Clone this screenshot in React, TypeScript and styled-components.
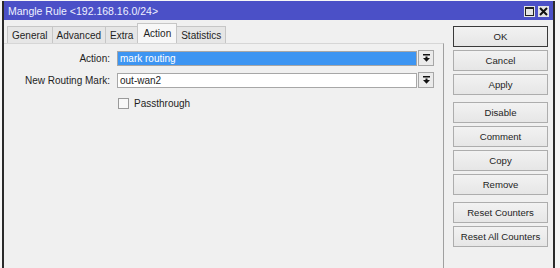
import React from "react";
import styled, { createGlobalStyle } from "styled-components";

const GlobalStyle = createGlobalStyle`
  html, body {
    margin: 0;
    padding: 0;
    background: #f6f6f6;
    overflow: hidden;
  }
  body {
    font-family: "Liberation Sans", Arial, sans-serif;
    font-size: 10px;
    color: #1e1e1e;
  }
`;

const tabs = ["General", "Advanced", "Extra", "Action", "Statistics"];

const buttonGroups = [
  ["OK", "Cancel", "Apply"],
  ["Disable", "Comment", "Copy", "Remove"],
  ["Reset Counters", "Reset All Counters"],
];

export default function App() {
  return (
    <>
      <GlobalStyle />
      <Window>
        <TitleBar>
          <Title>Mangle Rule &lt;192.168.16.0/24&gt;</Title>
          <Controls>
            <ControlBox>
              <svg width="9" height="9" viewBox="0 0 9 9">
                <rect x="0.5" y="0.5" width="8" height="8" fill="none" stroke="#222" />
                <rect x="0" y="0" width="9" height="2" fill="#222" />
              </svg>
            </ControlBox>
            <ControlBox>
              <svg width="9" height="9" viewBox="0 0 9 9">
                <path d="M1 1 L8 8 M8 1 L1 8" stroke="#111" strokeWidth="2" />
              </svg>
            </ControlBox>
          </Controls>
        </TitleBar>
        <Body>
          <LeftPanel>
            <TabBar>
              {tabs.map((t) => (
                <Tab key={t} $active={t === "Action"}>
                  {t}
                </Tab>
              ))}
            </TabBar>
            <Pane>
              <FormGrid>
                <Label>Action:</Label>
                <Field $selected>mark routing</Field>
                <DropButton>
                  <DropIcon />
                </DropButton>

                <Label>New Routing Mark:</Label>
                <Field>out-wan2</Field>
                <DropButton>
                  <DropIcon />
                </DropButton>

                <span />
                <CheckRow>
                  <CheckBox />
                  <span>Passthrough</span>
                </CheckRow>
              </FormGrid>
            </Pane>
          </LeftPanel>
          <ButtonColumn>
            {buttonGroups.map((group, i) => (
              <ButtonGroup key={i}>
                {group.map((b) => (
                  <Button key={b} $default={b === "OK"}>
                    {b}
                  </Button>
                ))}
              </ButtonGroup>
            ))}
          </ButtonColumn>
        </Body>
      </Window>
    </>
  );
}

function DropIcon() {
  return (
    <svg width="7" height="8" viewBox="0 0 7 8">
      <rect x="0" y="0" width="7" height="1.5" fill="#111" />
      <rect x="2.5" y="2.5" width="2" height="2" fill="#111" />
      <polygon points="0,4 7,4 3.5,7.8" fill="#111" />
    </svg>
  );
}

const Window = styled.div`
  box-sizing: border-box;
  margin: 1px 0 0 2px;
  width: 553px;
  height: 267px;
  border-left: 2px solid #2a2a2a;
  border-right: 2px solid #2a2a2a;
  background: #f0f0f0;
  display: flex;
  flex-direction: column;
`;

const TitleBar = styled.div`
  height: 19px;
  background: #4b50c7;
  display: flex;
  align-items: center;
  padding: 0 4px 0 4px;
  color: #eef0ff;
  font-size: 10.5px;
`;

const Title = styled.span`
  white-space: nowrap;
`;

const Controls = styled.div`
  margin-left: auto;
  display: flex;
  gap: 3px;
  margin-top: 1px;
`;

const ControlBox = styled.div`
  width: 11px;
  height: 11px;
  background: #e4e4e4;
  display: flex;
  align-items: center;
  justify-content: center;
`;

const Body = styled.div`
  flex: 1;
  display: flex;
  min-height: 0;
`;

const LeftPanel = styled.div`
  flex: 1;
  display: flex;
  flex-direction: column;
`;

const TabBar = styled.div`
  height: 23px;
  box-sizing: border-box;
  display: flex;
  align-items: flex-end;
  padding-left: 3px;
`;

const Tab = styled.div<{ $active?: boolean }>`
  height: ${(p) => (p.$active ? "20px" : "17px")};
  box-sizing: border-box;
  padding: 0 ${(p) => (p.$active ? "5px" : "4px")};
  display: flex;
  align-items: center;
  border: 1px solid #c6c6c6;
  border-bottom: none;
  margin-right: -1px;
  background: ${(p) => (p.$active ? "#f7f7f7" : "#e6e6e6")};
  color: #1e1e1e;
  white-space: nowrap;
  position: relative;
  z-index: ${(p) => (p.$active ? 1 : 0)};
`;

const Pane = styled.div`
  flex: 1;
  border-top: 1px solid #d6d6d6;
  border-right: 1px solid #a0a0a0;
  padding-top: 6px;
`;

const FormGrid = styled.div`
  display: grid;
  grid-template-columns: 106px 308px 16px;
  grid-auto-rows: 16px;
  row-gap: 6px;
  align-items: center;
`;

const Label = styled.div`
  text-align: right;
  white-space: nowrap;
  grid-column: 1;
`;

const Field = styled.div<{ $selected?: boolean }>`
  margin-left: 7px;
  margin-right: 1px;
  height: 15px;
  box-sizing: border-box;
  border: 1px solid #a7a7a7;
  background: ${(p) => (p.$selected ? "#3d95f2" : "#ffffff")};
  color: ${(p) => (p.$selected ? "#ffffff" : "#1e1e1e")};
  padding: 0 2px;
  display: flex;
  align-items: center;
  white-space: nowrap;
`;

const DropButton = styled.div`
  width: 16px;
  height: 16px;
  box-sizing: border-box;
  border: 1px solid #a7a7a7;
  background: #ebebeb;
  display: flex;
  align-items: center;
  justify-content: center;
`;

const CheckRow = styled.div`
  grid-column: 2 / span 2;
  display: flex;
  align-items: center;
  gap: 5px;
  margin-left: 8px;
  margin-top: 2px;
`;

const CheckBox = styled.div`
  width: 11px;
  height: 11px;
  box-sizing: border-box;
  border: 1px solid #9a9a9a;
  background: #f8f8f8;
`;

const ButtonColumn = styled.div`
  width: 109px;
  box-sizing: border-box;
  padding: 6px 0 0 9px;
  display: flex;
  flex-direction: column;
  gap: 7px;
`;

const ButtonGroup = styled.div`
  display: flex;
  flex-direction: column;
  gap: 3px;
`;

const Button = styled.div<{ $default?: boolean }>`
  width: 95px;
  height: 21px;
  box-sizing: border-box;
  border: 1px solid ${(p) => (p.$default ? "#3a3a3a" : "#adadad")};
  background: linear-gradient(#f2f2f2, #e6e6e6);
  display: flex;
  align-items: center;
  justify-content: center;
  white-space: nowrap;
  color: #1e1e1e;
  font-size: 9.6px;
`;
